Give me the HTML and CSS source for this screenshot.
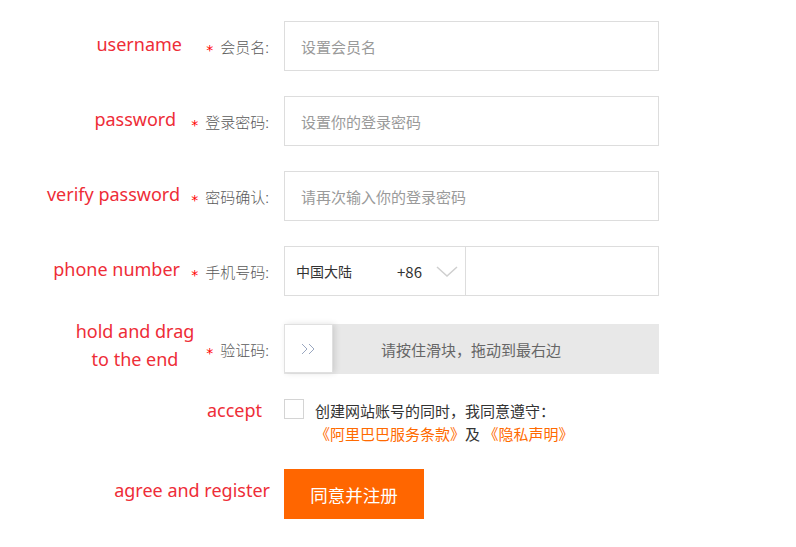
FILE: index.html
```html
<!DOCTYPE html>
<html lang="zh-CN">
<head>
    <meta charset="UTF-8">
    <meta name="viewport" content="width=device-width, initial-scale=1.0">
    <title>注册</title>
    <link rel="stylesheet" href="styles.css">
</head>
<body>
    <form class="register-form">
        <div class="row">
            <div class="note">username</div>
            <label class="label"><span class="req">*</span>会员名:</label>
            <div class="field"><input type="text" placeholder="设置会员名"></div>
        </div>

        <div class="row">
            <div class="note note-pw">password</div>
            <label class="label"><span class="req">*</span>登录密码:</label>
            <div class="field"><input type="password" placeholder="设置你的登录密码"></div>
        </div>

        <div class="row">
            <div class="note note-verify">verify password</div>
            <label class="label"><span class="req">*</span>密码确认:</label>
            <div class="field"><input type="password" placeholder="请再次输入你的登录密码"></div>
        </div>

        <div class="row row-phone">
            <div class="note note-verify">phone number</div>
            <label class="label"><span class="req">*</span>手机号码:</label>
            <div class="field phone">
                <div class="country">
                    <span class="country-name">中国大陆</span>
                    <span class="country-code">+86</span>
                    <svg class="chevron" width="22" height="11" viewBox="0 0 22 11">
                        <polyline points="1,1 11,10 21,1" fill="none" stroke="#cfcfcf" stroke-width="1.5"/>
                    </svg>
                </div>
                <input type="text" class="phone-input">
            </div>
        </div>

        <div class="row">
            <div class="note note-drag"><span>hold and drag<br>to the end</span></div>
            <label class="label"><span class="req">*</span>验证码:</label>
            <div class="field slider">
                <div class="handle">
                    <svg width="16" height="12" viewBox="0 0 16 12">
                        <polyline points="1,1 6,6 1,11" fill="none" stroke="#9aa7c0" stroke-width="1"/>
                        <polyline points="8,1 13,6 8,11" fill="none" stroke="#9aa7c0" stroke-width="1"/>
                    </svg>
                </div>
                <div class="slider-text">请按住滑块，拖动到最右边</div>
            </div>
        </div>

        <div class="row row-agree">
            <div class="note note-accept">accept</div>
            <div class="checkbox"></div>
            <div class="agree-text">
                创建网站账号的同时，我同意遵守：<br>
                <a href="#">《阿里巴巴服务条款》</a>及 <a href="#">《隐私声明》</a>
            </div>
        </div>

        <div class="row row-submit">
            <div class="note note-submit">agree and register</div>
            <button type="button" class="submit">同意并注册</button>
        </div>
    </form>
</body>
</html>
```

FILE: styles.css
```css
body {
    margin: 0;
    background: #fff;
    font-family: "Noto Sans", "Noto Sans CJK SC", sans-serif;
}
.register-form {
    padding-top: 21px;
}
.row {
    display: flex;
    align-items: center;
    height: 50px;
    margin-bottom: 25px;
}
.row-phone {
    margin-bottom: 28px;
}
.note {
    width: 182px;
    text-align: right;
    color: #ee2d37;
    font-size: 18px;
    white-space: nowrap;
    box-sizing: border-box;
    margin-bottom: 4px;
}
.note-pw {
    padding-right: 6px;
}
.note-verify {
    padding-right: 2px;
}
.note-drag {
    text-align: left;
    margin-bottom: 0;
}
.note-drag span {
    display: block;
    width: 124px;
    margin-left: 73px;
    margin-top: -8px;
    text-align: center;
    line-height: 28px;
}
.label {
    width: 87px;
    text-align: right;
    color: #5a5a5a;
    font-size: 15px;
    font-weight: 300;
    font-family: "Noto Sans CJK SC", sans-serif;
    white-space: nowrap;
}
.req {
    color: #f00;
    margin-right: 7px;
    font-family: "DejaVu Sans", sans-serif;
    font-size: 14px;
    font-weight: 400;
    position: relative;
    top: 2px;
}
.field {
    margin-left: 15px;
    width: 375px;
    height: 50px;
}
.field input {
    box-sizing: border-box;
    width: 100%;
    height: 50px;
    border: 1px solid #ddd;
    padding: 0 16px;
    font-size: 15px;
    font-family: "Noto Sans CJK SC", sans-serif;
    color: #333;
    outline: none;
}
.field input::placeholder {
    color: #9a9a9a;
}
.phone {
    display: flex;
    box-sizing: border-box;
    border: 1px solid #ddd;
}
.country {
    box-sizing: border-box;
    width: 181px;
    display: flex;
    align-items: center;
    padding-left: 11px;
    border-right: 1px solid #ddd;
    font-family: "Noto Sans CJK SC", sans-serif;
    font-size: 14px;
    color: #333;
}
.country-name {
    width: 101px;
}
.country-code {
    width: 39px;
    font-size: 15px;
}
.phone .phone-input {
    flex: 1;
    border: none;
    height: 48px;
}
.slider {
    display: flex;
    background: #e8e8e8;
}
.handle {
    width: 49px;
    height: 49px;
    background: #fff;
    border: 1px solid #e0e0e0;
    box-sizing: border-box;
    box-shadow: 2px 0 6px rgba(0, 0, 0, 0.12);
    display: flex;
    align-items: center;
    justify-content: center;
}
.slider-text {
    flex: 1;
    display: flex;
    align-items: center;
    padding-left: 48px;
    font-family: "Noto Sans CJK SC", sans-serif;
    font-size: 15px;
    color: #666;
}
.row-agree {
    align-items: flex-start;
    height: auto;
    margin-bottom: 24px;
}
.note-accept {
    width: 262px;
    line-height: 23px;
    margin-bottom: 0;
}
.checkbox {
    width: 18px;
    height: 18px;
    border: 1px solid #d4d4d4;
    margin-left: 22px;
}
.agree-text {
    margin-left: 11px;
    font-family: "Noto Sans CJK SC", sans-serif;
    font-size: 15px;
    line-height: 23px;
    color: #333;
}
.agree-text a {
    color: #ff6a00;
    text-decoration: none;
}
.note-submit {
    width: 270px;
    margin-bottom: 8px;
}
.submit {
    margin-left: 14px;
    width: 140px;
    height: 50px;
    border: none;
    background: #ff6600;
    color: #fff;
    font-size: 17.5px;
    font-family: "Noto Sans CJK SC", sans-serif;
    cursor: pointer;
}
```
